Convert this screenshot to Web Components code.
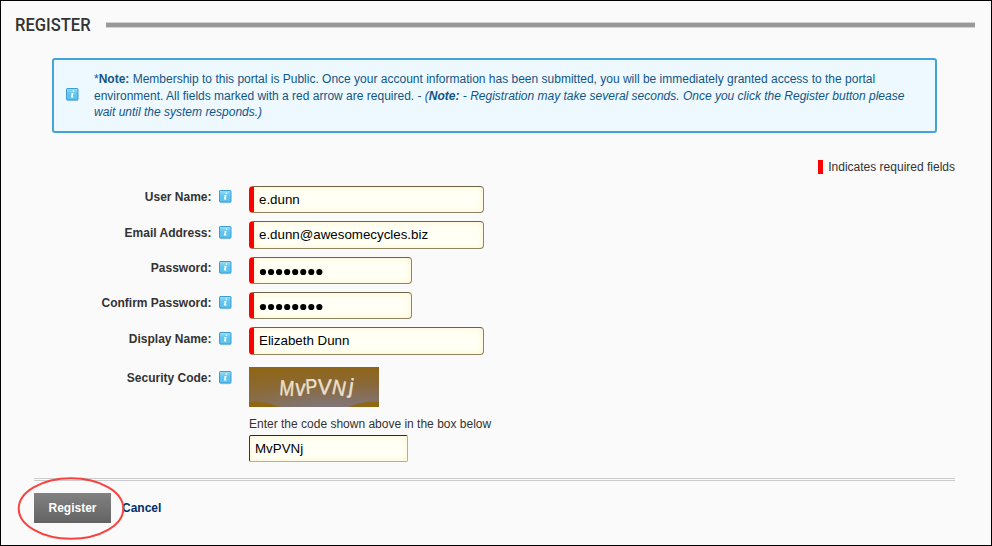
<!DOCTYPE html>
<html lang="en"><head><meta charset="utf-8"><title>Register</title>
<style>html,body{margin:0;background:#fafafa}body{font:12px "Liberation Sans",Arial,sans-serif;color:#333}</style></head>
<body>
<register-page></register-page>
<script>
const define = (name, html, setup) => customElements.define(name, class extends HTMLElement {
  constructor() {
    super();
    this.attachShadow({mode: 'open'}).innerHTML = html;
  }
  connectedCallback() { if (setup) setup(this, this.shadowRoot); }
});

define('info-icon', `
<style>:host{display:block;width:13px;height:14px;flex:none}svg{display:block}</style>
<svg width="13" height="14" viewBox="0 0 13 14">
<defs><linearGradient id="g" x1="0" y1="0" x2="0" y2="1"><stop offset="0" stop-color="#9adcf5"/><stop offset=".45" stop-color="#62c5ee"/><stop offset="1" stop-color="#56c3f0"/></linearGradient></defs>
<rect x="1" y="12" width="11" height="1" fill="#ccd2d5"/><rect x="2" y="13" width="9" height="1" fill="#eceeef"/>
<rect x=".5" y=".5" width="11.5" height="11.5" rx=".7" fill="url(#g)" stroke="#3c9fd2"/>
<path d="M6.9 2.6h1.4l-.3 1.2H6.6zM5.4 4.9h2.2L6.7 8.6h.8l-.2.8H4.8l.9-3.7H5.2z" fill="#fff"/></svg>`);

define('page-title', `
<style>:host{display:flex;height:20px;align-items:center;padding:14px 16px 0 14px}
.t{width:91px;flex:none;font:500 18.2px/20px Roboto,sans-serif;color:#333;white-space:nowrap}
.t span{display:inline-block;transform:scaleX(.91);transform-origin:0 50%}
.r{flex:1;height:4px;background:#999;border:solid #d2d2d2;border-width:1px 0}</style>
<div class="t"><span><slot></slot></span></div><div class="r"></div>`);

define('note-box', `
<style>:host{display:flex;box-sizing:border-box;width:885px;height:75px;margin:23px 0 0 51px;border:2px solid #46a3d5;border-radius:3px;background:#edf9ff;color:#125687;padding:11px 0 0 12px;line-height:16.5px;white-space:nowrap}
info-icon{margin:17px 15px 0 0}</style>
<info-icon></info-icon><div><slot></slot></div>`);

define('required-legend', `
<style>:host{display:flex;justify-content:flex-end;align-items:center;height:14px;margin:27px 36px 0 0}
i{width:5px;height:14px;background:#f00;margin-right:5px}</style><i></i><slot></slot>`);

define('text-box', `
<style>:host{display:flex;box-sizing:border-box;align-items:center;border:1px solid #8d8562;border-top-color:#6a6349;border-radius:4px;background:#fffff5;box-shadow:inset 0 0 7px #fff3cc;color:#000;font-size:13.33px;padding-left:5px;white-space:nowrap}
:host([required]){border-left:5px solid #f00}
:host([h="28"]){padding-bottom:1px}
:host([plain]){border-radius:2px;border-color:#2c2a25 #b9b184 #b9b184 #3a362c}</style><slot></slot>`, (host, root) => {
  host.style.width = host.getAttribute('w') + 'px';
  host.style.height = host.getAttribute('h') + 'px';
});

define('form-row', `
<style>:host{display:flex;align-items:flex-start}
.l{width:211.5px;text-align:right;font-weight:bold;line-height:14px;margin-top:var(--lt,4px)}
info-icon{margin:var(--it,4px) 17px 0 7.5px}</style>
<div class="l"></div><info-icon></info-icon><div><slot></slot></div>`, (host, root) => {
  root.querySelector('.l').textContent = host.getAttribute('label');
  host.style.height = host.getAttribute('rh') + 'px';
});

define('password-dots', `
<style>:host{display:block}svg{display:block;margin-top:2px}</style>
<svg width="70" height="8"></svg>`, (host, root) => {
  root.querySelector('svg').innerHTML = Array.from({length: 8}, (_, i) =>
    `<circle cx="${4 + i * 8.05}" cy="4" r="3.1" fill="#000"/>`).join('');
});

define('captcha-image', `
<style>:host{display:block;width:130px;height:40px}svg{display:block}</style>
<svg width="130" height="40"><defs>
<linearGradient id="a" x1="0" y1="0" x2="0" y2="1"><stop offset="0" stop-color="#8f6516"/><stop offset=".45" stop-color="#89693a"/><stop offset="1" stop-color="#80757a"/></linearGradient>
<linearGradient id="b"><stop offset="0" stop-color="#926610" stop-opacity=".35"/><stop offset=".5" stop-color="#926610" stop-opacity="0"/></linearGradient></defs>
<rect width="130" height="40" fill="url(#a)"/><rect width="130" height="40" fill="url(#b)"/>
<path d="M0 35Q16 34 31 40H0zM99 40Q114 34 130 35V40z" fill="#926712"/>
<g fill="#ede0cf" stroke="#ede0cf" stroke-width=".4" font-family="Liberation Sans,Arial,sans-serif" font-size="21">
<text transform="translate(30 28) rotate(4) scale(.85 1.03)">M</text><text transform="translate(46 28.5) rotate(3) scale(.95 1.1)">v</text><text transform="translate(57 27) rotate(-4) scale(.85 1)">P</text><text transform="translate(68.5 27) rotate(2) scale(.98 1.03)">V</text><text transform="translate(82 26.5) rotate(12) scale(.9 1)">N</text><text transform="translate(99 26) rotate(9)">j</text></g></svg>`);

define('action-bar', `
<style>:host{display:flex;position:relative;margin:16px 36px 0 33px;height:60px;align-items:flex-start;border-top:1px solid #ccc;font-weight:bold}
:host::before{content:"";position:absolute;left:0;right:0;top:1px;height:1px;background:#ccc}
button{margin:14px 11px 0 0;width:77px;height:30px;padding:0;border:0;background:linear-gradient(#818181,#636363);color:#fff;font:inherit}
.c{margin-top:22px;line-height:14px;color:#002e6d}
svg{position:absolute;left:-17px;top:-2px}</style>
<button>Register</button><span class="c">Cancel</span>
<svg width="108" height="64"><ellipse cx="54" cy="31.5" rx="52.3" ry="30.3" fill="none" stroke="#f8423f" stroke-width="2"/></svg>`);

define('register-page', `
<style>:host{display:block;box-sizing:border-box;width:992px;height:546px;border:1px solid #000;background:#fafafa;overflow:hidden}
.f{margin:12px 0 0 -1px}
.w{display:block;line-height:14px;margin:10px 0 4px}</style>
<page-title>REGISTER</page-title>
<note-box><div>*<b>Note:</b> Membership to this portal is Public. Once your account information has been submitted, you will be immediately granted access to the portal</div><div>environment. All fields marked with a red arrow are required. - <i>(<b>Note:</b> - Registration may take several seconds. Once you click the Register button please</i></div><div><i>wait until the system responds.)</i></div></note-box>
<required-legend>Indicates required fields</required-legend>
<div class="f">
<form-row label="User Name:" rh="35"><text-box required w="235" h="27">e.dunn</text-box></form-row>
<form-row label="Email Address:" rh="36" style="--lt:5px;--it:5px"><text-box required w="235" h="28">e.dunn@awesomecycles.biz</text-box></form-row>
<form-row label="Password:" rh="35"><text-box required w="163" h="27"><password-dots></password-dots></text-box></form-row>
<form-row label="Confirm Password:" rh="35"><text-box required w="163" h="27"><password-dots></password-dots></text-box></form-row>
<form-row label="Display Name:" rh="40" style="--lt:5px;--it:5px"><text-box required w="235" h="28">Elizabeth Dunn</text-box></form-row>
<form-row label="Security Code:" rh="95"><captcha-image></captcha-image><span class="w">Enter the code shown above in the box below</span><text-box plain w="159" h="27">MvPVNj</text-box></form-row>
</div>
<action-bar></action-bar>`);
</script>
</body></html>
